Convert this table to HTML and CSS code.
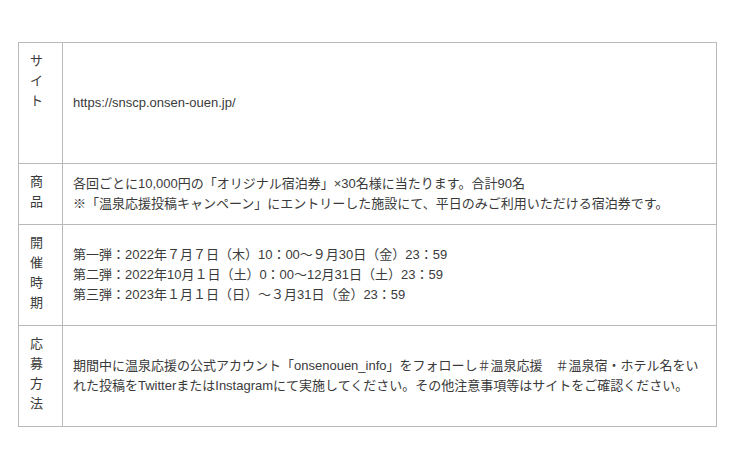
FILE: index.html
```html
<!DOCTYPE html>
<html lang="ja">
<head>
<meta charset="utf-8">
<title>温泉応援投稿キャンペーン</title>
<link rel="stylesheet" href="styles.css">
</head>
<body>
<table class="info">
  <tbody>
    <tr>
      <th class="label">サイト</th>
      <td class="value value-tall">https://snscp.onsen-ouen.jp/</td>
    </tr>
    <tr>
      <th class="label">商品</th>
      <td class="value">各回ごとに10,000円の「オリジナル宿泊券」×30名様に当たります。合計90名<br>※「温泉応援投稿キャンペーン」にエントリーした施設にて、平日のみご利用いただける宿泊券です。</td>
    </tr>
    <tr>
      <th class="label">開催時期</th>
      <td class="value">第一弾：2022年７月７日（木）10：00～９月30日（金）23：59<br>第二弾：2022年10月１日（土）0：00～12月31日（土）23：59<br>第三弾：2023年１月１日（日）～３月31日（金）23：59</td>
    </tr>
    <tr>
      <th class="label">応募方法</th>
      <td class="value">期間中に温泉応援の公式アカウント「onsenouen_info」をフォローし＃温泉応援　＃温泉宿・ホテル名をいれた投稿をTwitterまたはInstagramにて実施してください。その他注意事項等はサイトをご確認ください。</td>
    </tr>
  </tbody>
</table>
</body>
</html>
```
FILE: styles.css
```css
html, body {
  margin: 0;
  padding: 0;
  background: #ffffff;
}
body {
  padding: 42px 0 0 18px;
  font-family: "Liberation Sans", "Noto Sans CJK JP", sans-serif;
  font-size: 13px;
  line-height: 20px;
  color: #3a3a3a;
}
.info {
  width: 699px;
  border-collapse: collapse;
  table-layout: fixed;
}
.info th, .info td {
  border: 1px solid #b9b9b9;
}
.label {
  width: 21px;
  padding: 8px 11px 12px 11px;
  font-weight: normal;
  text-align: left;
  vertical-align: top;
}
.value {
  padding: 10px 10px 10px 10px;
  vertical-align: middle;
}
.value-tall {
  padding-top: 50px;
  padding-bottom: 50px;
}
```
